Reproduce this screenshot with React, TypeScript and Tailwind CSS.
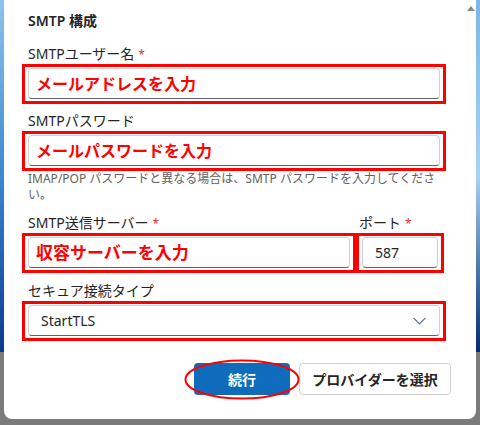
import { ReactNode } from "react";

function Label({ children, required }: { children: ReactNode; required?: boolean }) {
  return (
    <div className="h-5 leading-5 text-[14px] text-[#242424] whitespace-nowrap">
      {children}
      {required && <span className="ml-1 text-[12px] text-[#d13438]">*</span>}
    </div>
  );
}

// red annotation frame around a field
function RedBox({ children, className = "" }: { children: ReactNode; className?: string }) {
  return (
    <div className={`border-[3px] border-[#ff0000] px-[3px] pt-[1px] pb-[2px] ${className}`}>
      {children}
    </div>
  );
}

function Input({ children, className = "" }: { children?: ReactNode; className?: string }) {
  return (
    <div
      className={`h-[31px] flex items-center rounded-[4px] border border-[#d1d1d1] border-b-[#616161] bg-white ${className}`}
    >
      {children}
    </div>
  );
}

export default function App() {
  return (
    <div className="w-[480px] h-[425px] flex bg-[#7b7b7b] overflow-hidden font-['Noto_Sans','Noto_Sans_CJK_JP',sans-serif]">
      {/* desktop strip left */}
      <div className="w-[4px] h-[352px] bg-gradient-to-b from-[#8cc4ec] via-[#3c86d2] to-[#0b3a8f]" />

      {/* dialog */}
      <div className="w-[472px] h-[419px] bg-white rounded-b-[8px] flex">
        <div className="flex-1 pl-6 pr-[25px] pt-[11px] flex flex-col">
          <div className="h-5 leading-5 text-[14px] font-semibold text-[#242424]">SMTP 構成</div>

          <div className="mt-[13px]">
            <Label required>SMTPユーザー名</Label>
          </div>
          <RedBox className="-ml-[6px] -mr-[5px]">
            <Input className="pl-[7px]">
              <span className="text-[16px] font-bold text-[#ff0000]">メールアドレスを入力</span>
            </Input>
          </RedBox>

          <div className="mt-[7px]">
            <Label>SMTPパスワード</Label>
          </div>
          <RedBox className="-ml-[6px] -mr-[5px]">
            <Input className="pl-[7px]">
              <span className="text-[16px] font-bold text-[#ff0000]">メールパスワードを入力</span>
            </Input>
          </RedBox>
          <div className="text-[12px] leading-[16px] text-[#616161] whitespace-nowrap">
            <div>IMAP/POP パスワードと異なる場合は、SMTP パスワードを入力してくださ</div>
            <div>い。</div>
          </div>

          <div className="mt-[10px] -ml-[6px] -mr-[3px] flex">
            <div className="flex-1 flex flex-col">
              <div className="pl-[6px]">
                <Label required>SMTP送信サーバー</Label>
              </div>
              <RedBox>
                <Input className="pl-[7px]">
                  <span className="text-[17px] font-bold text-[#ff0000]">収容サーバーを入力</span>
                </Input>
              </RedBox>
            </div>
            <div className="w-[88px] flex flex-col">
              <div className="pl-[3px]">
                <Label required>ポート</Label>
              </div>
              <RedBox className="px-[1px]">
                <Input className="px-3">
                  <span className="text-[14px] text-[#242424]">587</span>
                </Input>
              </RedBox>
            </div>
          </div>

          <div className="mt-[8px]">
            <Label>セキュア接続タイプ</Label>
          </div>
          <RedBox className="-ml-[6px] -mr-[5px]">
            <Input className="px-3 justify-between">
              <span className="text-[14px] text-[#242424]">StartTLS</span>
              <svg width="13" height="8" viewBox="0 0 13 8" className="mr-[1px]">
                <polyline points="0.5,0.8 6.5,6.8 12.5,0.8" fill="none" stroke="#5b6f86" strokeWidth="1.2" />
              </svg>
            </Input>
          </RedBox>

          <div className="mt-[22px] -mr-[10px] flex justify-end gap-[9px]">
            <div className="relative">
              <button className="w-[96px] h-[32px] rounded-[4px] bg-[#0f6cbd] text-white text-[14px] font-bold">
                続行
              </button>
              <svg
                className="absolute -left-[10px] -top-[4px] pointer-events-none"
                width="116"
                height="41"
                viewBox="0 0 116 41"
              >
                <ellipse cx="58" cy="20.5" rx="56.5" ry="19" fill="none" stroke="#ff0000" strokeWidth="2" />
              </svg>
            </div>
            <button className="w-[152px] h-[32px] rounded-[4px] border border-[#d1d1d1] bg-white text-[#242424] text-[14px] font-bold">
              プロバイダーを選択
            </button>
          </div>
        </div>

        {/* scrollbar */}
        <div className="w-[10px] flex justify-center pt-[6px]">
          <svg width="8" height="5" viewBox="0 0 8 5">
            <polygon points="0,5 4,0 8,5" fill="#8a8a8a" />
          </svg>
        </div>
      </div>

      {/* desktop strip right */}
      <div className="w-[4px] h-[352px] bg-gradient-to-b from-[#7ab8e8] via-[#a9d3ef] to-[#072a6c]" />
    </div>
  );
}
